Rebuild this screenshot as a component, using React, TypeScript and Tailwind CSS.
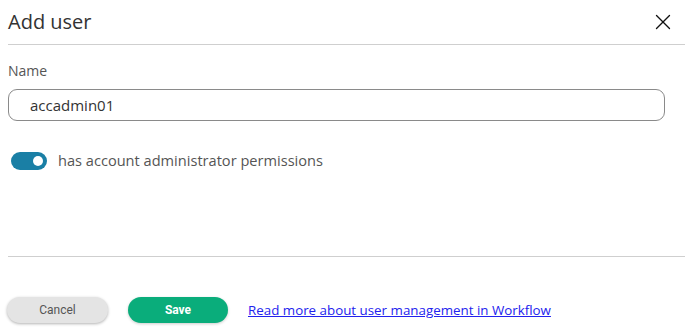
import { X } from 'lucide-react';

export default function App() {
  return (
    <main className="w-[693px] h-[332px] bg-white font-['Open_Sans',sans-serif] text-[#333] flex flex-col">
      <header className="flex items-center justify-between h-[45px] mx-2 border-b border-[#cfcfcf]">
        <h1 className="text-[20px] leading-none font-normal text-[#333] -mt-[1px]">Add user</h1>
        <button className="mr-[9px] -mt-[1px] text-[#111]">
          <X size={26} strokeWidth={1.25} />
        </button>
      </header>

      <section className="flex flex-col mx-2 pt-[17px] h-[212px] border-b border-[#cfcfcf]">
        <label className="text-[14px] leading-[18px] text-[#555]">Name</label>
        <div className="mt-[9px] mr-[20px] h-[32px] rounded-[9px] border border-[#8a8a8a] flex items-center pl-[21px] text-[15px] text-[#333]">
          accadmin01
        </div>
        <div className="mt-[29px] flex items-center gap-[11px] pl-[3px]">
          <div className="w-[36px] h-[18px] rounded-full bg-[#1a7fa5] flex items-center justify-end pr-[4px]">
            <div className="w-[10px] h-[10px] rounded-full bg-white" />
          </div>
          <span className="text-[14.6px] text-[#555]">has account administrator permissions</span>
        </div>
      </section>

      <footer className="flex items-center px-[7px] pt-[40px] gap-[20px]">
        <button className="w-[101px] h-[26px] rounded-full bg-[#e4e4e4] shadow-[0_1px_3px_rgba(0,0,0,0.3)] font-['Roboto',sans-serif] text-[12px] text-[#555]">
          Cancel
        </button>
        <button className="w-[100px] h-[26px] rounded-full bg-[#0aad7b] shadow-[0_1px_3px_rgba(0,0,0,0.2)] font-['Roboto',sans-serif] font-bold text-[12px] text-white">
          Save
        </button>
        <a href="#" className="text-[13.35px] text-[#2222ee] underline">
          Read more about user management in Workflow
        </a>
      </footer>
    </main>
  );
}
